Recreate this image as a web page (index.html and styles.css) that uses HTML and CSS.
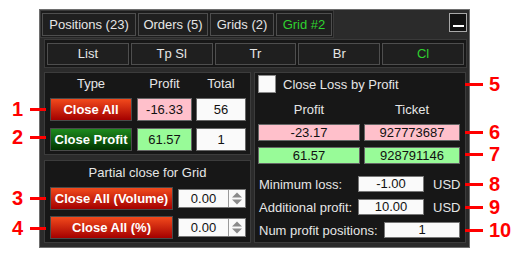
FILE: index.html
```html
<!DOCTYPE html>
<html lang="en">
<head>
  <meta charset="UTF-8">
  <link rel="stylesheet" href="styles.css">
  <title>Grid panel</title>
</head>
<body>
<div class="stage">
  <div class="panel">
    <div class="topbar">
      <div class="tabs">
        <div class="tab w94">Positions (23)</div>
        <div class="tab w70">Orders (5)</div>
        <div class="tab w64">Grids (2)</div>
        <div class="tab w56 green">Grid #2</div>
      </div>
      <div class="min-btn"></div>
    </div>

    <div class="subtabs">
      <div class="sub">List</div>
      <div class="sub">Tp Sl</div>
      <div class="sub">Tr</div>
      <div class="sub">Br</div>
      <div class="sub green">Cl</div>
    </div>

    <div class="main">
      <div class="leftcol">
        <div class="box box1">
          <div class="row head">
            <div class="c1">Type</div>
            <div class="c2">Profit</div>
            <div class="c3">Total</div>
          </div>
          <div class="row r1">
            <div class="c1 btn red">Close All</div>
            <div class="c2 field pink">-16.33</div>
            <div class="c3 field white">56</div>
          </div>
          <div class="row r2">
            <div class="c1 btn greenbtn">Close Profit</div>
            <div class="c2 field lime">61.57</div>
            <div class="c3 field white">1</div>
          </div>
        </div>

        <div class="box box2">
          <div class="title">Partial close for Grid</div>
          <div class="prow p1">
            <div class="btn red wide">Close All (Volume)</div>
            <div class="spin">
              <div class="spin-val">0.00</div>
              <div class="spin-arr">
                <svg width="16" height="17" viewBox="0 0 16 17"><path d="M3 7.5 L8 2.5 L13 7.5 Z" fill="#8a8a8a"/><path d="M3 9.5 L13 9.5 L8 14.5 Z" fill="#8a8a8a"/></svg>
              </div>
            </div>
          </div>
          <div class="prow p2">
            <div class="btn red wide">Close All (%)</div>
            <div class="spin">
              <div class="spin-val">0.00</div>
              <div class="spin-arr">
                <svg width="16" height="17" viewBox="0 0 16 17"><path d="M3 7.5 L8 2.5 L13 7.5 Z" fill="#8a8a8a"/><path d="M3 9.5 L13 9.5 L8 14.5 Z" fill="#8a8a8a"/></svg>
              </div>
            </div>
          </div>
        </div>
      </div>

      <div class="box box3">
        <div class="check-row">
          <div class="checkbox"></div>
          <span>Close Loss by Profit</span>
        </div>
        <div class="rrow rhead">
          <div class="rc1">Profit</div>
          <div class="rc2">Ticket</div>
        </div>
        <div class="rrow rv1">
          <div class="rc1 field pink">-23.17</div>
          <div class="rc2 field pink">927773687</div>
        </div>
        <div class="rrow rv2">
          <div class="rc1 field lime">61.57</div>
          <div class="rc2 field lime">928791146</div>
        </div>
        <div class="lrow l1">
          <div class="lbl">Minimum loss:</div>
          <div class="inp">-1.00</div>
          <div class="unit">USD</div>
        </div>
        <div class="lrow l2">
          <div class="lbl">Additional profit:</div>
          <div class="inp">10.00</div>
          <div class="unit">USD</div>
        </div>
        <div class="lrow l3">
          <div class="lbl lbl-long">Num profit positions:</div>
          <div class="inp inp-long">1</div>
        </div>
      </div>
    </div>
  </div>

  <!-- callouts -->
  <div class="mark left m1"><b>1</b><i></i></div>
  <div class="mark left m2"><b>2</b><i></i></div>
  <div class="mark left m3"><b>3</b><i></i></div>
  <div class="mark left m4"><b>4</b><i></i></div>
  <div class="mark right m5"><i></i><b>5</b></div>
  <div class="mark right m6"><i></i><b>6</b></div>
  <div class="mark right m7"><i></i><b>7</b></div>
  <div class="mark right m8"><i></i><b>8</b></div>
  <div class="mark right m9"><i></i><b>9</b></div>
  <div class="mark right m10"><i></i><b>10</b></div>
</div>
</body>
</html>
```

FILE: styles.css
```css
* {
  margin: 0;
  padding: 0;
  box-sizing: border-box;
}
body {
  background: #fff;
  font-family: "Liberation Sans", Arial, sans-serif;
  font-size: 13px;
  color: #e6e6e6;
}
.stage {
  position: relative;
  width: 521px;
  height: 257px;
  padding: 9px 0 0 39px;
}
.panel {
  width: 431px;
  height: 239px;
  border: 1px solid #6e6e6e;
  background: #2b2b2b;
  display: flex;
  flex-direction: column;
}
.green { color: #2fd12f; }

/* tabs */
.topbar {
  display: flex;
  justify-content: space-between;
  align-items: flex-start;
}
.tabs {
  display: flex;
  gap: 2px;
  padding: 2px 1px 1px 1px;
  border: 1px solid #3a3a3a;
  background: #1c1c1c;
}
.tab {
  height: 23px;
  border: 1px solid #4e4e4e;
  background: #1f1f1f;
  line-height: 21px;
  text-align: center;
  white-space: nowrap;
}
.w94 { width: 94px; }
.w70 { width: 70px; }
.w64 { width: 64px; }
.w56 { width: 56px; }
.tab.green { color: #2fd12f; }
.min-btn {
  position: relative;
  width: 18px;
  height: 19px;
  margin: 3px 2px 0 0;
  border: 1px solid #a8a8a8;
  background: #111;
}
.min-btn::after {
  content: "";
  position: absolute;
  left: 3px;
  right: 2px;
  bottom: 4px;
  height: 2px;
  background: #fff;
}

/* sub tabs */
.subtabs {
  display: flex;
  gap: 2px;
  height: 29px;
  margin: 1px 2px 0 4px;
  padding: 3px 2px 2px 2px;
  border: 1px solid #3a3a3a;
  background: #171717;
}
.sub {
  flex: 1;
  height: 22px;
  border: 1px solid #4e4e4e;
  background: #1f1f1f;
  line-height: 20px;
  text-align: center;
}

/* main area */
.main {
  display: flex;
  gap: 3px;
  margin: 4px 2px 0 4px;
}
.leftcol {
  width: 207px;
  display: flex;
  flex-direction: column;
  gap: 5px;
}
.box {
  border: 1px solid #3c3c3c;
  background: #171717;
}
.box1 {
  height: 83px;
  padding: 1px 0 0 5px;
}
.row { display: flex; }
.head { height: 20px; line-height: 20px; text-align: center; }
.c1 { width: 82px; }
.c2 { width: 55px; margin-left: 5px; }
.c3 { width: 50px; margin-left: 4px; }
.r1 { margin-top: 4px; }
.r2 { margin-top: 7px; }
.field {
  height: 23px;
  border: 1px solid #666;
  color: #111;
  text-align: center;
  line-height: 21px;
}
.pink { background: #ffc0cb; }
.lime { background: #98fb98; }
.white { background: #fafafa; }
.btn {
  height: 23px;
  border: 1px solid #4a4a4a;
  color: #fff;
  font-weight: bold;
  text-align: center;
  line-height: 21px;
  white-space: nowrap;
}
.red { background: linear-gradient(#f24a1c, #a40000); }
.greenbtn { background: linear-gradient(#1d8a1d, #003500); }

.box2 {
  height: 83px;
  padding: 2px 0 0 5px;
}
.title {
  height: 20px;
  line-height: 20px;
  text-align: center;
  padding-right: 5px;
}
.prow {
  display: flex;
  align-items: center;
  gap: 5px;
}
.p1 { margin-top: 4px; }
.p2 { margin-top: 6px; }
.wide { width: 123px; }
.spin {
  display: flex;
  width: 68px;
  height: 19px;
  border: 1px solid #777;
  background: #fafafa;
}
.spin-val {
  flex: 1;
  color: #111;
  text-align: center;
  line-height: 17px;
}
.spin-arr {
  width: 17px;
  border-left: 1px solid #999;
}
.spin-arr svg { display: block; }

/* right box */
.box3 {
  width: 212px;
  height: 171px;
  padding: 2px 0 0 3px;
}
.check-row {
  display: flex;
  align-items: center;
  gap: 7px;
  height: 18px;
}
.checkbox {
  width: 18px;
  height: 18px;
  border: 1px solid #8a8a8a;
  background: #fafafa;
}
.rrow { display: flex; }
.rc1 { width: 102px; }
.rc2 { width: 96px; margin-left: 4px; }
.rhead {
  margin-top: 7px;
  height: 20px;
  line-height: 20px;
  text-align: center;
}
.rrow .field { height: 17px; line-height: 15px; }
.rv1 { margin-top: 4px; }
.rv2 { margin-top: 6px; }
.lrow {
  display: flex;
  align-items: center;
  height: 16px;
}
.l1 { margin-top: 12px; }
.l2, .l3 { margin-top: 7px; }
.lbl { width: 100px; padding-left: 1px; white-space: nowrap; }
.lbl-long { width: 126px; }
.inp {
  width: 66px;
  height: 16px;
  border: 1px solid #777;
  background: #fafafa;
  color: #111;
  text-align: center;
  line-height: 14px;
}
.inp-long { width: 76px; }
.unit { margin-left: 9px; }

/* callouts */
.mark {
  position: absolute;
  display: flex;
  align-items: center;
  height: 24px;
}
.mark b {
  color: #f00;
  font-size: 20px;
  font-weight: bold;
  line-height: 24px;
}
.mark i {
  display: block;
  height: 3px;
  background: #f00;
}
.mark.left { left: 10px; gap: 7px; }
.mark.left b { width: 13px; text-align: right; }
.mark.left i { width: 16px; }
.mark.right { left: 465px; gap: 6px; }
.mark.right i { width: 18px; }
.m1 { top: 97px; }
.m2 { top: 125px; }
.m3 { top: 186px; }
.m4 { top: 216px; }
.m5 { top: 72px; }
.m6 { top: 120px; }
.m7 { top: 142px; }
.m8 { top: 172px; }
.m9 { top: 195px; }
.m10 { top: 218px; }
```
